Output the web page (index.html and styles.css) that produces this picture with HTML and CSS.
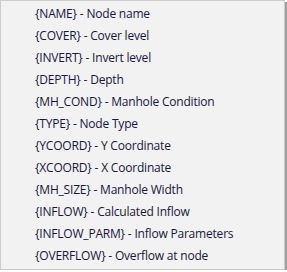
FILE: index.html
```html
<!DOCTYPE html>
<html lang="en">
<head>
<meta charset="UTF-8" />
<title>Node label fields</title>
<link rel="stylesheet" href="styles.css">
</head>
<body>

<div class="menu">
  <div class="item">{NAME} - Node name</div>
  <div class="item">{COVER} - Cover level</div>
  <div class="item">{INVERT} - Invert level</div>
  <div class="item">{DEPTH} - Depth</div>
  <div class="item">{MH_COND} - Manhole Condition</div>
  <div class="item">{TYPE} - Node Type</div>
  <div class="item">{YCOORD} - Y Coordinate</div>
  <div class="item">{XCOORD} - X Coordinate</div>
  <div class="item">{MH_SIZE} - Manhole Width</div>
  <div class="item">{INFLOW} - Calculated Inflow</div>
  <div class="item">{INFLOW_PARM} - Inflow Parameters</div>
  <div class="item">{OVERFLOW} - Overflow at node</div>
</div>

</body>
</html>
```

FILE: styles.css
```css
* {
  margin: 0;
  padding: 0;
  box-sizing: border-box;
}

body {
  background-color: #ffffff;
  font-family: "Open Sans", "Noto Sans", sans-serif;
  font-size: 12px;
}

.menu {
  width: 285px;
  height: 270px;
  padding: 2px 0;
  background-color: #f2f2f2;
  border: 1px solid #cccccc;
  box-shadow: 2px 2px 0 0 #a0a0a0;
}

.item {
  height: 22px;
  line-height: 22px;
  padding-left: 34px;
  color: #161640;
  letter-spacing: -0.2px;
  white-space: nowrap;
}
```
